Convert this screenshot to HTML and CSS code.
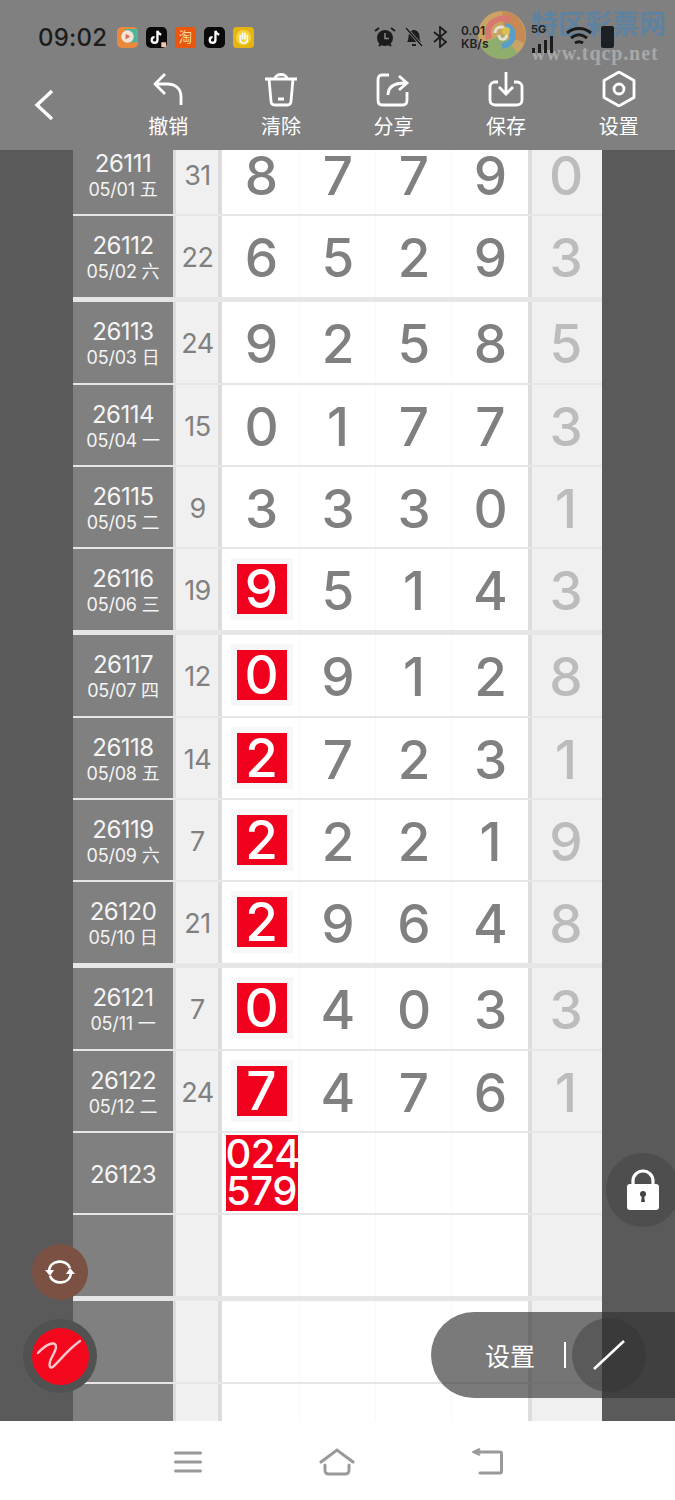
FILE: index.html
```html
<!DOCTYPE html>
<html lang="zh-CN">
<head>
  <meta charset="UTF-8">
  <title>走势图</title>
  <link rel="stylesheet" href="styles.css">
</head>
<body>
<div class="screen">

  <div class="top">
    <div class="status">
      <span class="time">09:02</span>
      <div class="apps">
        <svg class="app" viewBox="0 0 22 22"><rect width="22" height="22" rx="5" fill="#e8893e"/><path d="M8 2h14v14H12z" fill="#4fb59a"/><circle cx="11" cy="10" r="6.5" fill="#f3e6d6"/><path d="M9 7l5 3-5 3z" fill="#d9705a"/></svg>
        <svg class="app" viewBox="0 0 22 22"><rect width="22" height="22" rx="5" fill="#0a0a0a"/><path d="M12 4v9.500a3 3 0 1 1-3-3M12 4c.5 2.500 2 3.500 4 4" fill="none" stroke="#fff" stroke-width="2.400"/><rect x="16" y="16" width="5" height="5" fill="#f2c6a8"/></svg>
        <svg class="app" viewBox="0 0 22 22"><rect width="22" height="22" rx="3" fill="#e9570f"/><text x="11" y="16" class="app-text">淘</text></svg>
        <svg class="app" viewBox="0 0 22 22"><rect width="22" height="22" rx="5" fill="#0a0a0a"/><path d="M12 4v9.500a3 3 0 1 1-3-3M12 4c.5 2.500 2 3.500 4 4" fill="none" stroke="#fff" stroke-width="2.400"/></svg>
        <svg class="app" viewBox="0 0 22 22"><rect width="22" height="22" rx="4" fill="#e6b411"/><circle cx="11" cy="11" r="8" fill="#f4d23c"/><path d="M7.500 8v5M10 6v7M12.500 6v7M15 8v5M7.500 13c0 5 7.500 5 7.500 0" fill="none" stroke="#fff" stroke-width="1.600"/></svg>
      </div>
      <div class="sys">
        <svg class="sys-icon" width="22" height="22" viewBox="0 0 22 22"><circle cx="11" cy="12" r="8" fill="#1c1c1c"/><path d="M11 7v5.500h4" fill="none" stroke="#888" stroke-width="1.500"/><path d="M1 5l4-3M21 5l-4-3M5 20l2-2M17 20l-2-2" stroke="#1c1c1c" stroke-width="2"/></svg>
        <svg class="sys-icon" width="20" height="22" viewBox="0 0 20 22"><path d="M3 16c2-2 1-5 2-8 1-3 3-4 5-4s4 1 5 4 0 6 2 8z" fill="#1c1c1c"/><path d="M8 18h4v2H8z" fill="#1c1c1c"/><path d="M2 2l16 18" stroke="#888" stroke-width="3"/><path d="M2 2l16 18" stroke="#1c1c1c" stroke-width="1.500"/></svg>
        <svg class="sys-icon" width="17" height="22" viewBox="0 0 17 22"><path d="M2 6l12 10-6 5V1l6 5L2 16" fill="none" stroke="#1c1c1c" stroke-width="1.800"/></svg>
        <div class="speed"><span>0.01</span><span>KB/s</span></div>
        <div class="net"><span class="five-g">5G</span><svg width="26" height="17" viewBox="0 0 26 17"><path d="M1 12h3v5H1zM7 8h3v9H7zM13 4h3v13h-3zM19 0h3v17h-3z" fill="#1c1c1c"/></svg></div>
        <svg class="sys-icon" width="28" height="20" viewBox="0 0 28 20"><path d="M2 6c7-6 17-6 24 0M6 11c5-4 11-4 16 0M10 16c3-2 5-2 8 0" fill="none" stroke="#1c1c1c" stroke-width="3"/></svg>
        <span class="battery"></span>
      </div>
    </div>

    <div class="toolbar">
      <svg class="back" width="22" height="34" viewBox="0 0 22 34"><path d="M19 3L4 17l15 14" fill="none" stroke="#fff" stroke-width="3.400"/></svg>
      <div class="tools">
        <div class="tool">
          <svg width="36" height="36" viewBox="0 0 36 36"><path d="M15 3L5 13l10 10M5 13h12c9 0 14 5 14 13v8" fill="none" stroke="#fff" stroke-width="2.800" stroke-linejoin="round"/></svg>
          <span>撤销</span>
        </div>
        <div class="tool">
          <svg width="36" height="36" viewBox="0 0 36 36"><path d="M2 8h32M12 8c0-6 12-6 12 0M6 8l2 22c0 2 1 4 4 4h12c3 0 4-2 4-4l2-22M15 28h6" fill="none" stroke="#fff" stroke-width="2.800"/></svg>
          <span>清除</span>
        </div>
        <div class="tool">
          <svg width="36" height="36" viewBox="0 0 36 36"><path d="M14 4H7C4 4 3 6 3 9v20c0 3 1 5 4 5h21c3 0 4-2 4-5v-8" fill="none" stroke="#fff" stroke-width="2.800"/><path d="M13 24c0-8 5-12 17-12M24 5l8 7-8 7" fill="none" stroke="#fff" stroke-width="2.800"/></svg>
          <span>分享</span>
        </div>
        <div class="tool">
          <svg width="36" height="36" viewBox="0 0 36 36"><path d="M10 11H7c-3 0-5 2-5 5v13c0 3 2 5 5 5h22c3 0 5-2 5-5V16c0-3-2-5-5-5h-3" fill="none" stroke="#fff" stroke-width="2.800"/><path d="M18 1v22M11 16l7 7 7-7" fill="none" stroke="#fff" stroke-width="2.800"/></svg>
          <span>保存</span>
        </div>
        <div class="tool">
          <svg width="36" height="36" viewBox="0 0 36 36"><path d="M18 1l15 8.500v17L18 35 3 26.500v-17z" fill="none" stroke="#fff" stroke-width="2.800" stroke-linejoin="round"/><circle cx="18" cy="18" r="5" fill="none" stroke="#fff" stroke-width="2.800"/></svg>
          <span>设置</span>
        </div>
      </div>
    </div>
  </div>

  <div class="board">
    <div class="sheet">
      <div class="list" id="list"></div>
    </div>
  </div>

  <div class="nav">
    <svg width="28" height="22" viewBox="0 0 28 22"><path d="M1.500 2h25M1.500 11h25M1.500 20h25" stroke="#999" stroke-width="3" stroke-linecap="round"/></svg>
    <svg width="36" height="28" viewBox="0 0 36 28"><path d="M2 14L18 2l16 12" fill="none" stroke="#999" stroke-width="3" stroke-linecap="round"/><path d="M6 17v5c0 3 1 4 4 4h16c3 0 4-1 4-4v-5" fill="none" stroke="#999" stroke-width="3" stroke-linecap="round"/></svg>
    <svg width="31" height="27" viewBox="0 0 31 27"><path d="M8 1L2 4l6 3" fill="none" stroke="#999" stroke-width="2.500"/><path d="M3 4h25c1 0 1.500 .5 1.500 1.500v18c0 1-.5 1.500-1.500 1.500H8" fill="none" stroke="#999" stroke-width="3" stroke-linecap="round"/></svg>
  </div>

  <!-- watermark -->
  <div class="mark">
    <svg class="mark-logo" width="50" height="52" viewBox="0 0 50 52"><circle cx="25" cy="26" r="24" fill="#c9a465"/><path d="M25 2a24 24 0 0 1 22 32L28 26z" fill="#c78a55"/><path d="M3 35a24 24 0 0 0 38 9L25 26z" fill="#8fae6d"/><path d="M12 30C7 14 22 6 33 11" fill="none" stroke="#d8786e" stroke-width="6"/><path d="M28 17c10 0 12 18-3 20" fill="none" stroke="#5a9ec9" stroke-width="6"/><path d="M18 24c0-8 12-8 12 0s-8 8-8 2" fill="none" stroke="#e4e0d0" stroke-width="3"/><circle cx="29" cy="22" r="4" fill="#d9c14c"/></svg>
    <div class="mark-text">
      <span class="mark-cn">特区彩票网</span>
      <span class="mark-url">www.tqcp.net</span>
    </div>
  </div>

  <!-- floating buttons -->
  <div class="fab-sync">
    <svg width="32" height="32" viewBox="0 0 32 32"><path d="M5 15c1-12 18-12 21-3M27 17c-1 12-18 12-21 3" fill="none" stroke="#fff" stroke-width="2.600"/><path d="M1 14h9l-4 6zM31 18h-9l4-6z" fill="#fff"/></svg>
  </div>
  <div class="fab-pen">
    <div class="fab-pen-in">
      <svg width="48" height="40" viewBox="0 0 48 40"><path d="M2 17C10 8 20 4 20 11c0 6-9 14-6 20 3 4 13-14 30-26" fill="none" stroke="#f7c9cd" stroke-width="2.400" stroke-linecap="round"/></svg>
    </div>
  </div>
  <div class="fab-lock">
    <svg width="34" height="42" viewBox="0 0 34 42"><path d="M7 18V12a10 10 0 0 1 20 0v6" fill="none" stroke="#fff" stroke-width="3.200"/><rect x="1" y="15" width="32" height="26" rx="3" fill="#fff"/><circle cx="17" cy="25" r="3" fill="#444"/><path d="M16 26h2l1 7h-4z" fill="#444"/></svg>
  </div>
  <div class="pill">
    <span class="pill-text">设置</span>
    <span class="pill-bar"></span>
    <div class="pill-btn">
      <svg width="34" height="32" viewBox="0 0 34 32"><path d="M2 30L32 2" stroke="#fff" stroke-width="2.600"/></svg>
    </div>
  </div>

</div>

<script>
  // [期号, 日期, 和值, 数字, 末位, 分组位置]
  const rows = [
    ["26111", "05/01 五", "31", "8779", "0", ""],
    ["26112", "05/02 六", "22", "6529", "3", "end"],
    ["26113", "05/03 日", "24", "9258", "5", "start"],
    ["26114", "05/04 一", "15", "0177", "3", ""],
    ["26115", "05/05 二", "9", "3330", "1", ""],
    ["26116", "05/06 三", "19", "9514", "3", "end"],
    ["26117", "05/07 四", "12", "0912", "8", "start"],
    ["26118", "05/08 五", "14", "2723", "1", ""],
    ["26119", "05/09 六", "7", "2221", "9", ""],
    ["26120", "05/10 日", "21", "2964", "8", "end"],
    ["26121", "05/11 一", "7", "0403", "3", "start"],
    ["26122", "05/12 二", "24", "7476", "1", ""],
    ["26123", "", "", "", "", ""],
    ["", "", "", "", "", "end"],
    ["", "", "", "", "", "start"],
    ["", "", "", "", "", ""]
  ];
  const redFrom = 5;

  const html = rows.map((r, i) => {
    let first = r[3] ? r[3][0] : "";
    let cells = "";
    for (let n = 1; n < 4; n++) {
      cells += `<div class="num">${r[3] ? r[3][n] : ""}</div>`;
    }
    let hit = `<div class="num">${first}</div>`;
    if (i >= redFrom && first) {
      hit = `<div class="num"><span class="halo"><span class="hit">${first}</span></span></div>`;
    }
    if (r[0] === "26123") {
      hit = `<div class="num"><span class="hit-big">024<br>579</span></div>`;
    }
    const date = r[1] ? `<span class="date-sub">${r[1]}</span>` : "";
    return `<div class="row ${r[5]}">
      <div class="date"><span class="date-no">${r[0]}</span>${date}</div>
      <div class="sum">${r[2]}</div>
      <div class="nums">${hit}${cells}</div>
      <div class="last">${r[4]}</div>
    </div>`;
  }).join("");
  document.getElementById("list").innerHTML = html;
</script>
</body>
</html>
```

FILE: styles.css
```css
* {
  box-sizing: border-box;
}

body {
  margin: 0;
  background-color: #fff;
  font-family: "Inter", "Noto Sans CJK SC", sans-serif;
}

.screen {
  position: relative;
  width: 675px;
  height: 1500px;
  overflow: hidden;
}

/* top */
.top {
  height: 150px;
  background-color: #808080;
}

.status {
  position: relative;
  z-index: 2;
  display: flex;
  align-items: center;
  height: 74px;
  padding-left: 38px;
}

.time {
  width: 79px;
  font-size: 24px;
  font-weight: 500;
  letter-spacing: 0.2px;
  color: #1c1c1c;
}

.apps {
  display: flex;
  gap: 8px;
}

.app {
  width: 21px;
  height: 21px;
}

.app-text {
  font-size: 14px;
  fill: #f8d9a8;
  text-anchor: middle;
}

.sys {
  display: flex;
  align-items: center;
  margin-left: 120px;
}

.sys-icon {
  margin-right: 8px;
}

.speed {
  display: flex;
  flex-direction: column;
  width: 52px;
  margin-left: 4px;
  font-size: 12px;
  line-height: 13px;
  font-weight: 600;
  color: #222;
}

.net {
  position: relative;
  width: 34px;
  height: 24px;
  margin-left: 18px;
}

.net svg {
  position: absolute;
  left: 0;
  top: 11px;
}

.five-g {
  position: absolute;
  left: 0;
  top: -3px;
  font-size: 11px;
  font-weight: 700;
  color: #222;
}

.battery {
  width: 13px;
  height: 22px;
  margin-left: 0;
  background-color: #1c2024;
  border-radius: 2px;
}

.toolbar {
  display: flex;
  height: 76px;
}

.back {
  width: 22px;
  margin: 14px 0 0 33px;
}

.tools {
  display: flex;
  margin-left: 57px;
}

.tool {
  display: flex;
  flex-direction: column;
  align-items: center;
  width: 112.6px;
  margin-top: -3px;
  color: #fff;
  font-size: 20px;
  line-height: 26px;
}

.tool span {
  margin-top: 7px;
}

/* table */
.board {
  display: flex;
  justify-content: center;
  height: 1271px;
  background-color: #5a5a5a;
}

.sheet {
  width: 529px;
  overflow: hidden;
  background-color: #fff;
}

.list {
  margin-top: -16px;
}

.row {
  display: flex;
  height: 82px;
  border-bottom: 2px solid #e6e6e6;
}

.row.start {
  height: 83px;
}

.row.end {
  height: 86px;
  border-bottom-width: 5px;
}

.date {
  display: flex;
  flex-direction: column;
  align-items: center;
  justify-content: center;
  width: 100px;
  padding-top: 2px;
  background-color: #808080;
  color: #f4f4f4;
}

.date-no {
  font-size: 24px;
  line-height: 29px;
  letter-spacing: -0.5px;
}

.date-sub {
  font-size: 18px;
  line-height: 24px;
  letter-spacing: -0.2px;
}

.sum {
  display: flex;
  align-items: center;
  justify-content: center;
  width: 49px;
  padding: 2px 0 0 1px;
  background-color: #f0f0f0;
  border-left: 3px solid #dcdcdc;
  border-right: 4px solid #dcdcdc;
  font-size: 27px;
  letter-spacing: -0.5px;
  color: #808080;
}

.nums {
  display: flex;
  width: 306px;
}

.num {
  display: flex;
  flex: 0 0 76px;
  align-items: center;
  justify-content: center;
  padding: 3px 0 0 1px;
  border-right: 1px solid #f8f8f8;
  font-size: 53px;
  font-weight: 500;
  color: #808080;
}

.num:first-child {
  flex-basis: 78px;
  padding-left: 2px;
}

.num:last-child {
  border-right: none;
}

.last {
  display: flex;
  align-items: center;
  justify-content: center;
  width: 74px;
  padding: 3px 2px 0 0;
  background-color: #f0f0f0;
  border-left: 4px solid #dcdcdc;
  font-size: 53px;
  font-weight: 500;
  color: #bcbcbc;
}

.halo {
  display: flex;
  align-items: center;
  justify-content: center;
  width: 62px;
  height: 62px;
  margin-top: -4px;
  background-color: #f6f7f8;
}

.hit {
  display: flex;
  align-items: center;
  justify-content: center;
  width: 50px;
  height: 50px;
  background-color: #f0001c;
  color: #fff;
}

.hit-big {
  width: 72px;
  height: 76px;
  margin-top: -3px;
  background-color: #f0001c;
  color: #fff;
  font-size: 40px;
  font-weight: 500;
  line-height: 37px;
  letter-spacing: -0.5px;
  text-align: center;
}

/* bottom nav */
.nav {
  display: flex;
  align-items: center;
  justify-content: space-between;
  height: 79px;
  padding: 2px 172px 0 174px;
  background-color: #fff;
}

/* overlays */
.mark {
  position: absolute;
  z-index: 1;
  left: 477px;
  top: 9px;
  display: flex;
}

.mark-text {
  display: flex;
  flex-direction: column;
  margin: -3px 0 0 4px;
}

.mark-cn {
  font-size: 27px;
  line-height: 38px;
  font-weight: 700;
  color: #5d83a0;
}

.mark-url {
  font-family: "Liberation Serif", serif;
  font-size: 20px;
  line-height: 18px;
  font-weight: 700;
  letter-spacing: 0.9px;
  color: #a8a8a8;
}

.fab-sync {
  position: absolute;
  left: 32px;
  top: 1244px;
  display: flex;
  align-items: center;
  justify-content: center;
  width: 56px;
  height: 56px;
  border-radius: 50%;
  background-color: #7a5142;
}

.fab-pen {
  position: absolute;
  left: 23px;
  top: 1319px;
  display: flex;
  align-items: center;
  justify-content: center;
  width: 74px;
  height: 74px;
  border-radius: 50%;
  background-color: #505252;
}

.fab-pen-in {
  display: flex;
  align-items: center;
  justify-content: center;
  width: 57px;
  height: 57px;
  border-radius: 50%;
  background-color: #f2071d;
}

.fab-lock {
  position: absolute;
  left: 606px;
  top: 1153px;
  display: flex;
  align-items: center;
  justify-content: center;
  width: 74px;
  height: 74px;
  border-radius: 50%;
  background-color: #4e4e4e;
}

.pill {
  position: absolute;
  left: 431px;
  top: 1312px;
  display: flex;
  align-items: center;
  width: 244px;
  height: 86px;
  padding-left: 54px;
  border-radius: 43px 0 0 43px;
  background-color: rgba(50, 50, 50, 0.65);
}

.pill-text {
  font-size: 25px;
  color: #fff;
}

.pill-bar {
  width: 2px;
  height: 26px;
  margin-left: 29px;
  background-color: #fff;
}

.pill-btn {
  display: flex;
  align-items: center;
  justify-content: center;
  width: 74px;
  height: 74px;
  margin-left: 6px;
  border-radius: 50%;
  background-color: rgba(50, 50, 50, 0.4);
}
```
